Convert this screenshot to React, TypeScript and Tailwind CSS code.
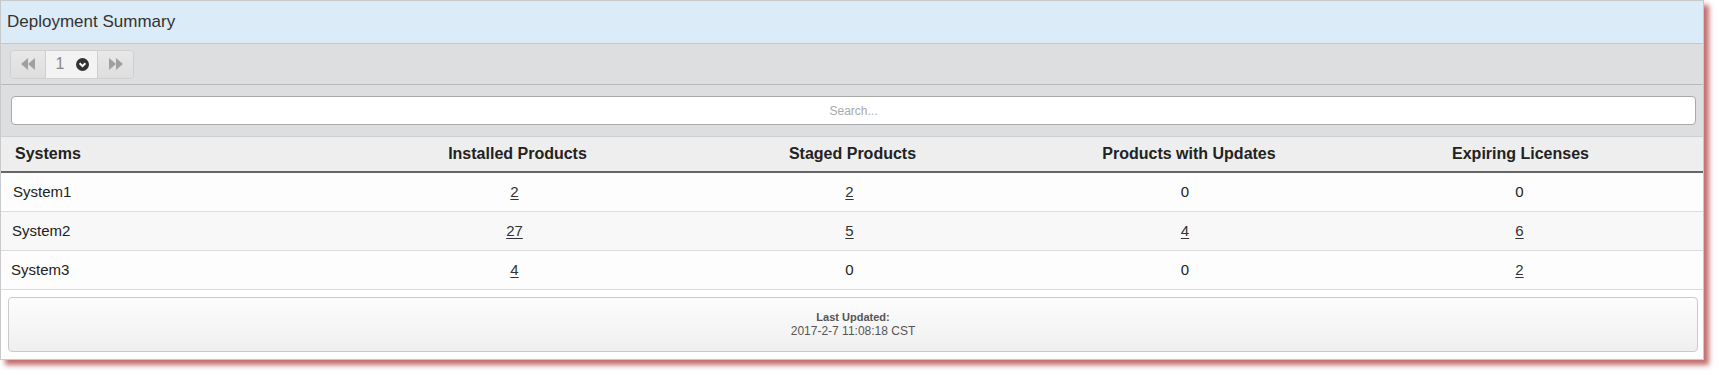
import React from "react"

const rows = [
  { name: "System1", installed: 2, staged: 2, updates: 0, expiring: 0 },
  { name: "System2", installed: 27, staged: 5, updates: 4, expiring: 6 },
  { name: "System3", installed: 4, staged: 0, updates: 0, expiring: 2 },
]

function Cell({ value }: { value: number }) {
  if (value === 0) return <span>0</span>
  return (
    <a href="#" className="text-[#333] underline underline-offset-2">
      {value}
    </a>
  )
}

function FastBackward() {
  return (
    <svg width="14" height="12" viewBox="0 0 14 12" fill="#a0a0a0">
      <path d="M7 0 L0 6 L7 12 Z" />
      <path d="M14 0 L7 6 L14 12 Z" />
    </svg>
  )
}

function FastForward() {
  return (
    <svg width="14" height="12" viewBox="0 0 14 12" fill="#a0a0a0">
      <path d="M0 0 L7 6 L0 12 Z" />
      <path d="M7 0 L14 6 L7 12 Z" />
    </svg>
  )
}

function ChevronCircle() {
  return (
    <svg width="13" height="13" viewBox="0 0 13 13">
      <circle cx="6.5" cy="6.5" r="6.5" fill="#333" />
      <path d="M3.6 5.2 L6.5 8.1 L9.4 5.2" stroke="#fff" strokeWidth="2" fill="none" />
    </svg>
  )
}

export default function App() {
  return (
    <main className="min-h-[375px] bg-white font-['Liberation_Sans',Arial,sans-serif] text-[#333]">
      <div className="w-[1704px] border border-[#c9c9c9] bg-white shadow-[5px_5px_5px_rgba(175,60,60,0.75)]">
        <header className="flex h-[43px] items-center border-b border-[#c4c8cc] bg-[#dcebf8] px-[6px] text-[17px] text-[#333]">
          Deployment Summary
        </header>

        <div className="flex h-[41px] items-center border-b border-[#b9b9b9] bg-[#dddee0] pl-[9px]">
          <div className="flex h-[29px] overflow-hidden rounded-[4px] border border-[#cfcfcf]">
            <button className="flex w-[34px] items-center justify-center bg-gradient-to-b from-[#e8e8e8] to-[#dedede]">
              <FastBackward />
            </button>
            <div className="flex w-[53px] items-center justify-center gap-[12px] border-x border-[#cfcfcf] bg-[#f3f3f3] pl-[2px] text-[16px] text-[#888]">
              <span>1</span>
              <ChevronCircle />
            </div>
            <button className="flex w-[35px] items-center justify-center bg-gradient-to-b from-[#e8e8e8] to-[#dedede]">
              <FastForward />
            </button>
          </div>
        </div>

        <div className="bg-[#dddee0] pt-[11px] pr-[7px] pb-[11px] pl-[10px]">
          <input
            placeholder="Search..."
            className="block h-[29px] w-full rounded-[4px] border border-[#aaa] bg-white text-center text-[12px] placeholder:text-[#a9a9a9]"
          />
        </div>

        <div className="grid h-[37px] grid-cols-[346px_335px_335px_336px_1fr] items-center border-y border-t-[#cfcfcf] border-b-[#666] border-b-2 bg-[#eeeeee] pr-[17px] text-[16px] font-bold text-[#222]">
          <div className="pl-[14px]">Systems</div>
          <div className="pl-[6px] text-center">Installed Products</div>
          <div className="pl-[6px] text-center">Staged Products</div>
          <div className="pl-[8px] text-center">Products with Updates</div>
          <div className="pl-[2px] text-center">Expiring Licenses</div>
        </div>

        {rows.map((r, i) => (
          <div
            key={r.name}
            className={`grid h-[39px] grid-cols-[346px_335px_335px_336px_1fr] items-center border-b border-[#dcdcdc] pr-[17px] text-[15px] text-[#222] ${
              i === 1 ? "bg-[#f8f8f8]" : "bg-[#fdfdfd]"
            }`}
          >
            <div className={i === 0 ? "pl-[12px]" : i === 1 ? "pl-[11px]" : "pl-[10px]"}>{r.name}</div>
            <div className="text-center">
              <Cell value={r.installed} />
            </div>
            <div className="text-center">
              <Cell value={r.staged} />
            </div>
            <div className="text-center">
              <Cell value={r.updates} />
            </div>
            <div className="text-center">
              <Cell value={r.expiring} />
            </div>
          </div>
        ))}

        <div className="pt-[7px] pr-[5px] pb-[7px] pl-[7px]">
          <div className="flex h-[55px] flex-col items-center justify-center rounded-[4px] border border-[#cacaca] bg-gradient-to-b from-[#fdfdfd] to-[#efefef] text-[#555]">
            <div className="text-[11px] leading-[13px] font-bold">Last Updated:</div>
            <div className="text-[12px] leading-[14px]">2017-2-7 11:08:18 CST</div>
          </div>
        </div>
      </div>
    </main>
  )
}
